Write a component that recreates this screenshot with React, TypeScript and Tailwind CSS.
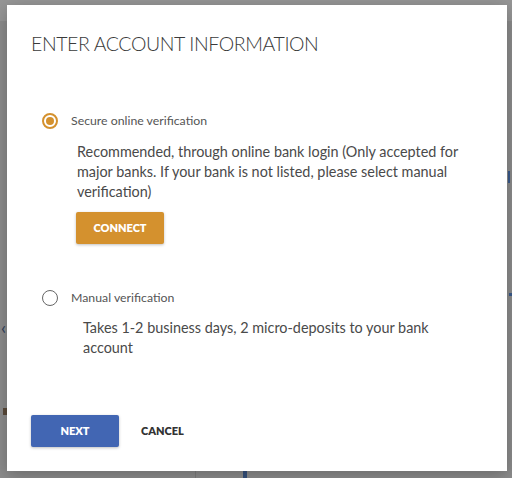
export default function App() {
  return (
    <div
      className="relative w-[512px] h-[478px] overflow-hidden bg-[#8c8c8c]"
      style={{ fontFamily: "Lato, 'Open Sans', sans-serif" }}
    >
      {/* page behind the overlay */}
      <div className="absolute inset-x-0 top-0 h-[21px] bg-[#969696]" />
      <span className="absolute left-[1px] top-[318px] text-[18px] leading-none text-[#2c3e5c]">‹</span>
      <div className="absolute left-[3px] top-[408px] w-[4px] h-[7px] bg-[#5a4a3a]" />
      <div className="absolute left-[508px] top-[171px] w-[2px] h-[12px] bg-[#3a5a8c]" />
      <div className="absolute left-[509px] top-[293px] w-[3px] h-[3px] bg-[#3a5a8c]" />
      <div className="absolute left-[243px] top-[471px] w-[4px] h-[7px] bg-[#34507c]" />
      <div className="absolute left-[195px] top-[471px] w-[1px] h-[7px] bg-[#7c7c7c]" />

      {/* dialog */}
      <div className="absolute left-[7px] top-[5px] w-[500px] h-[466px] bg-white shadow-[0_4px_16px_rgba(0,0,0,0.25)] flex flex-col pl-[24px]">
        <h1 className="mt-[25px] text-[19.5px] font-light tracking-[-0.4px] text-[#3a3a3a] leading-[28px]">
          ENTER ACCOUNT INFORMATION
        </h1>

        <div className="mt-[55px] flex flex-col">
          <label className="flex items-center h-[16px] pl-[11px]">
            <span className="w-[16px] h-[16px] rounded-full border-2 border-[#d4912e] flex items-center justify-center">
              <span className="w-[8px] h-[8px] rounded-full bg-[#d4912e]" />
            </span>
            <span className="ml-[13px] text-[12.3px] text-[#555]">Secure online verification</span>
          </label>
          <p className="mt-[13px] ml-[46px] w-[395px] text-[14.4px] leading-[20px] text-[#4a4a4a]">
            Recommended, through online bank login (Only accepted for major banks. If your bank is not listed, please select manual verification)
          </p>
          <button className="mt-[10px] ml-[45px] w-[88px] h-[32px] rounded-[2px] bg-[#d4912e] text-white text-[11px] font-extrabold shadow-[0_1px_3px_rgba(0,0,0,0.25)]">
            CONNECT
          </button>

          <label className="mt-[46px] flex items-center h-[16px] pl-[11px]">
            <span className="w-[16px] h-[16px] rounded-full border-[1.5px] border-[#666]" />
            <span className="ml-[13px] text-[12.3px] text-[#555]">Manual verification</span>
          </label>
          <p className="mt-[12px] ml-[52px] w-[390px] text-[14.4px] leading-[20px] text-[#4a4a4a]">
            Takes 1-2 business days, 2 micro-deposits to your bank account
          </p>
        </div>

        <div className="mt-auto mb-[24px] flex items-center">
          <button className="w-[88px] h-[32px] rounded-[2px] bg-[#4266b3] text-white text-[11px] font-extrabold shadow-[0_1px_3px_rgba(0,0,0,0.25)]">
            NEXT
          </button>
          <button className="ml-[22px] text-[11px] font-extrabold text-[#333]">
            CANCEL
          </button>
        </div>
      </div>
    </div>
  );
}
